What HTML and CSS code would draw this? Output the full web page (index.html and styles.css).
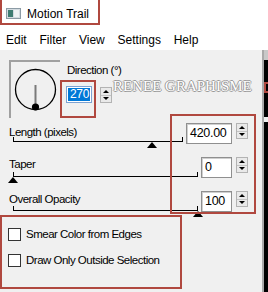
FILE: index.html
```html
<!DOCTYPE html>
<html lang="en">
<head>
    <meta charset="UTF-8">
    <meta name="viewport" content="width=device-width, initial-scale=1.0">
    <title>Motion Trail</title>
    <link rel="stylesheet" href="styles.css">
</head>
<body>
    <div class="titlebar">
        <div class="title">
            <svg class="app-icon" width="15" height="11" viewBox="0 0 15 11">
                <rect x="0.5" y="0.5" width="14" height="10" fill="#d3dbe0" stroke="#8c9ba5"/>
                <rect x="2" y="2" width="5" height="7" fill="#3f7c72"/>
                <rect x="8" y="2" width="5" height="7" fill="#eef2f4"/>
            </svg>
            <span>Motion Trail</span>
        </div>
    </div>

    <div class="menubar">
        <span>Edit</span>
        <span>Filter</span>
        <span>View</span>
        <span>Settings</span>
        <span>Help</span>
    </div>

    <div class="dialog">
        <div class="controls">
            <div class="direction">
                <div class="dial">
                    <svg width="49" height="56" viewBox="0 0 49 56">
                        <circle cx="24.5" cy="27.5" r="20" fill="none" stroke="#000" stroke-width="1.3"/>
                        <line x1="24.5" y1="23" x2="24.5" y2="45" stroke="#7a7a7a" stroke-width="2"/>
                        <circle cx="24.5" cy="45" r="3.6" fill="#000"/>
                    </svg>
                </div>
                <div class="dir-right">
                    <div class="label dir-label">Direction (°)</div>
                    <div class="dir-inputs">
                        <div class="mark-box">
                            <div class="dir-field"><span class="selected">270</span></div>
                        </div>
                        <div class="spin dir-spin"><span class="up"></span><span class="down"></span></div>
                        <div class="watermark">RENEE GRAPHISME</div>
                    </div>
                </div>
            </div>

            <div class="slider-row row-length">
                <div class="slider-main">
                    <div class="label">Length (pixels)</div>
                    <div class="track"><span class="thumb" style="left: 82%"></span></div>
                </div>
                <div class="field-wrap">
                    <div class="field wide">420.00</div>
                    <div class="spin"><span class="up"></span><span class="down"></span></div>
                </div>
            </div>

            <div class="slider-row row-taper">
                <div class="slider-main">
                    <div class="label">Taper</div>
                    <div class="track"><span class="thumb" style="left: 0%"></span></div>
                </div>
                <div class="field-wrap">
                    <div class="field">0</div>
                    <div class="spin"><span class="up"></span><span class="down"></span></div>
                </div>
            </div>

            <div class="slider-row row-opacity">
                <div class="slider-main">
                    <div class="label">Overall Opacity</div>
                    <div class="track"><span class="thumb" style="left: 100%"></span></div>
                </div>
                <div class="field-wrap">
                    <div class="field">100</div>
                    <div class="spin"><span class="up"></span><span class="down"></span></div>
                </div>
            </div>

            <div class="checks">
                <div class="check"><span class="box"></span>Smear Color from Edges</div>
                <div class="check"><span class="box"></span>Draw Only Outside Selection</div>
            </div>

            <!-- red frame drawn over the value fields -->
            <div class="mark-values"></div>
        </div>

        <div class="preview">
            <div class="preview-top"></div>
            <div class="preview-mark"></div>
            <div class="preview-gap"></div>
        </div>
    </div>
</body>
</html>
```

FILE: styles.css
```css
* {
    box-sizing: border-box;
}

body {
    margin: 0;
    width: 268px;
    height: 292px;
    overflow: hidden;
    background: #fff;
    font-family: "Liberation Sans", Arial, sans-serif;
    color: #000;
}

.titlebar {
    height: 26px;
    background: #fff;
}

.title {
    display: flex;
    align-items: flex-start;
    gap: 6px;
    width: 100px;
    height: 25px;
    padding: 7px 0 0 4px;
    border: 2px solid #b0483f;
    border-top: none;
    font-size: 12px;
    line-height: 14px;
}

.app-icon {
    margin-top: 1px;
}

.menubar {
    display: flex;
    gap: 12.8px;
    height: 24px;
    padding: 7px 0 0 6px;
    font-size: 12px;
    line-height: 14px;
    background: #fff;
}

.dialog {
    display: flex;
    height: 242px;
    background: #f0f0f0;
}

.controls {
    position: relative;
    width: 262px;
    padding-top: 10px;
    font-size: 11.5px;
    letter-spacing: -0.5px;
}

.label {
    line-height: 14px;
    white-space: nowrap;
}

/* direction */
.direction {
    display: flex;
    height: 58px;
    padding-left: 9px;
}

.dial {
    width: 51px;
    height: 58px;
    border-top: 2px solid #a0a0a0;
    border-left: 2px solid #a0a0a0;
}

.dial svg {
    display: block;
}

.dir-right {
    display: flex;
    flex-direction: column;
}

.dir-label {
    margin-top: 3px;
    padding-left: 7px;
}

.dir-inputs {
    display: flex;
    align-items: flex-start;
    margin-top: 3px;
}

.mark-box {
    width: 36px;
    height: 38px;
    padding: 4px 0 0 4px;
    border: 2px solid #b0483f;
}

.dir-field {
    width: 26px;
    height: 17px;
    padding: 1px;
    border: 1px solid #7da2d2;
    background: #fff;
}

.selected {
    display: block;
    height: 13px;
    padding-left: 2px;
    background: #0078d7;
    color: #fff;
    font-size: 12px;
    line-height: 13px;
    letter-spacing: -0.3px;
}

.dir-spin {
    margin: 7px 0 0 4px;
}

.watermark {
    margin: -1px 0 0 1px;
    font-family: "Liberation Serif", "Times New Roman", serif;
    font-size: 15px;
    line-height: 15px;
    letter-spacing: 0;
    white-space: nowrap;
    color: #fff;
    text-shadow: -1px 0 #9a9a9a, 1px 0 #9a9a9a, 0 -1px #9a9a9a, 0 1px #9a9a9a;
}

/* sliders */
.slider-row {
    display: flex;
    justify-content: space-between;
    padding: 0 14px 0 9px;
}

.track {
    position: relative;
    width: 185px;
    height: 4px;
    margin-left: 4px;
    border-top: 1px solid #000;
}

.track::before,
.track::after {
    content: "";
    position: absolute;
    top: -5px;
    width: 1px;
    height: 4px;
    background: #000;
}

.track::before {
    left: 0;
}

.track::after {
    right: 0;
}

.thumb {
    position: absolute;
    top: 0;
    width: 0;
    height: 0;
    margin-left: -5px;
    border-left: 5px solid transparent;
    border-right: 5px solid transparent;
    border-bottom: 6px solid #000;
}

.row-length .label { margin-top: 7px; }
.row-length .track { margin-top: 2px; width: 170px; }
.row-length .field-wrap { margin-top: 5px; }

.row-taper .label { margin-top: 12px; }
.row-taper .track { margin-top: 5px; }
.row-taper .field-wrap { margin-top: 12px; }

.row-opacity .label { margin-top: 12px; }
.row-opacity .track { margin-top: 4px; }
.row-opacity .field-wrap { margin-top: 11px; }

.field-wrap {
    display: flex;
    align-items: flex-start;
    gap: 4px;
}

.field {
    width: 31px;
    height: 21px;
    padding-left: 3px;
    border: 1px solid #8f8f8f;
    box-shadow: inset 1px 1px 0 #cfcfcf;
    background: #fff;
    font-size: 12.5px;
    line-height: 19px;
    letter-spacing: -0.3px;
}

.field.wide {
    width: 46px;
}

.spin {
    display: flex;
    flex-direction: column;
    flex-shrink: 0;
    width: 12px;
    height: 16px;
    border: 1px solid #b3b3b3;
    background: #e9e9e9;
}

.spin span {
    flex: 1;
    display: flex;
    align-items: center;
    justify-content: center;
}

.spin .down {
    border-top: 1px solid #c4c4c4;
}

.spin .up::before,
.spin .down::before {
    content: "";
    border-left: 3px solid transparent;
    border-right: 3px solid transparent;
}

.spin .up::before {
    border-bottom: 3px solid #000;
}

.spin .down::before {
    border-top: 3px solid #000;
}

/* checkboxes */
.checks {
    display: flex;
    flex-direction: column;
    gap: 12px;
    width: 182px;
    height: 74px;
    margin-top: 1px;
    padding: 10px 0 0 6px;
    border: 2px solid #b0483f;
}

.check {
    display: flex;
    align-items: center;
    gap: 5px;
    height: 14px;
    line-height: 14px;
    white-space: nowrap;
}

.box {
    flex-shrink: 0;
    width: 13px;
    height: 13px;
    border: 1px solid #333;
    background: #fff;
}

.mark-values {
    position: absolute;
    left: 170px;
    top: 64px;
    width: 86px;
    height: 100px;
    border: 2px solid #b0483f;
    pointer-events: none;
}

/* preview strip on the right */
.preview {
    display: flex;
    flex-direction: column;
    width: 6px;
    border-left: 2px solid #a9a9a9;
    background: #000;
}

.preview-top {
    height: 10px;
    background: #c8c8c8;
}

.preview-mark {
    height: 11px;
    margin-top: 22px;
    border: 2px solid #b0483f;
    border-right: none;
}

.preview-gap {
    height: 5px;
    margin-top: 24px;
    background: #f0f0f0;
}
```
